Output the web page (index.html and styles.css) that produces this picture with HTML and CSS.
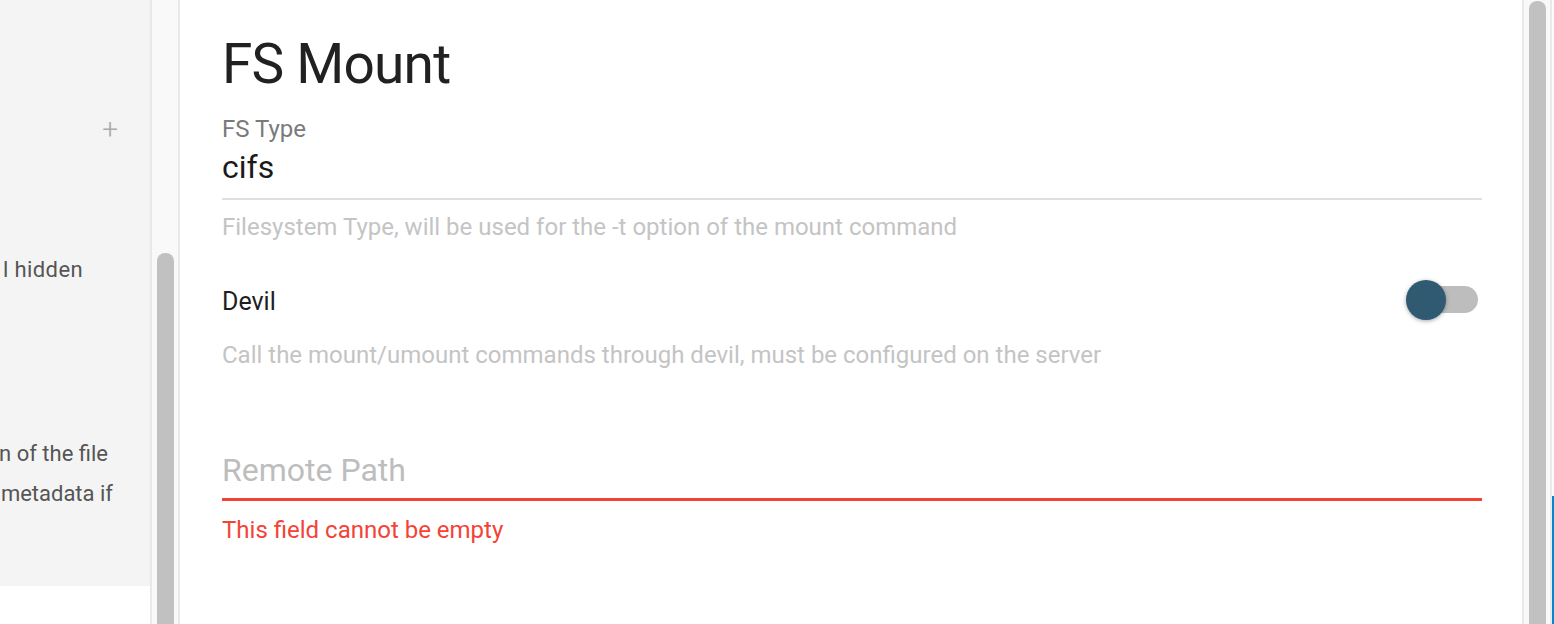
FILE: index.html
```html
<!DOCTYPE html>
<html>
<head>
<meta charset="utf-8">
<link rel="stylesheet" href="styles.css">
</head>
<body>
<div class="app">
  <aside class="side">
    <div class="side-panel">
      <div class="plus-row"><span class="plus">+</span></div>
      <div class="side-text t1 w1"><span>l hidden</span></div>
      <div class="side-text t2 w2"><span>n of the file</span></div>
      <div class="side-text w3"><span>metadata if</span></div>
    </div>
  </aside>
  <div class="scroll left-scroll"><div class="thumb"></div></div>
  <main class="main">
    <h1 class="title">FS Mount</h1>
    <div class="field">
      <label class="label">FS Type</label>
      <div class="value">cifs</div>
      <div class="line"></div>
      <div class="help help1">Filesystem Type, will be used for the -t option of the mount command</div>
    </div>
    <div class="toggle-row">
      <span class="toggle-label">Devil</span>
      <span class="switch"><span class="track"></span><span class="knob"></span></span>
    </div>
    <div class="help help2">Call the mount/umount commands through devil, must be configured on the server</div>
    <div class="field err-field">
      <div class="placeholder">Remote Path</div>
      <div class="line err-line"></div>
      <div class="err">This field cannot be empty</div>
    </div>
  </main>
  <div class="scroll right-scroll"><div class="thumb"></div></div>
  <div class="sliver"><div class="sliver-blue"></div></div>
</div>
</body>
</html>
```
FILE: styles.css
```css
* { box-sizing: border-box; }
html, body { margin: 0; padding: 0; height: 100%; overflow: hidden; }
body { font-family: Roboto, "Liberation Sans", sans-serif; background: #fff; }
.app { display: flex; height: 624px; }

.side { width: 150px; flex: none; background: #fff; }
.side-panel { height: 586px; background: #f4f4f4; padding-top: 116px; }
.plus-row { display: flex; justify-content: flex-end; padding-right: 32px; }
.plus { font-size: 28px; font-weight: 300; color: #a9a9a9; line-height: 28px; }
.side-text { display: flex; justify-content: flex-end; white-space: nowrap; font-size: 22px; color: #555; line-height: 40px; }
.w1 { width: 83px; letter-spacing: 0.4px; }
.w2 { width: 108px; }
.w3 { width: 113px; }
.t1 { margin-top: 106px; }
.t2 { margin-top: 144px; }

.scroll { width: 30px; flex: none; background: #f9f9f9; border-left: 2px solid #e9e9e9; border-right: 2px solid #e9e9e9; display: flex; flex-direction: column; padding: 0 4px 0 5px; }
.thumb { background: #c1c1c1; border-radius: 8px 8px 0 0; flex: 1; }
.left-scroll { padding-top: 253px; }
.right-scroll { padding-top: 1px; }

.main { flex: 1; padding: 24px 40px 0 42px; background: #fff; }
.title { margin: 0; font-size: 55px; font-weight: 400; color: #212121; line-height: 80px; letter-spacing: -0.8px; }
.label { display: block; font-size: 24px; color: #7a7a7a; line-height: 28px; margin-top: 11px; }
.value { font-size: 32px; color: #1a1a1a; line-height: 40px; margin-top: 4px; }
.line { height: 2px; background: #e0e0e0; margin-top: 11px; }
.help { font-size: 24px; color: #c4c4c4; line-height: 28px; }
.help1 { margin-top: 13px; }
.toggle-row { display: flex; align-items: flex-start; justify-content: space-between; margin-top: 39px; height: 40px; padding-right: 4px; }
.toggle-label { font-size: 25px; color: #1e1e1e; line-height: 40px; margin-top: 2px; }
.switch { position: relative; width: 72px; height: 40px; }
.track { position: absolute; left: 14px; top: 6px; width: 58px; height: 27px; border-radius: 14px; background: #bdbdbd; }
.knob { position: absolute; left: 0; top: 0; width: 40px; height: 40px; border-radius: 50%; background: #2f5a71; box-shadow: 0 1px 4px rgba(0,0,0,0.35); }
.help2 { margin-top: 21px; }
.err-field { margin-top: 81px; }
.placeholder { font-size: 32px; color: #bdbdbd; line-height: 40px; }
.err-line { height: 3px; background: #f44336; margin-top: 8px; }
.err { font-size: 24px; color: #f44336; line-height: 28px; margin-top: 15px; }

.sliver { width: 2px; flex: none; background: #fbfbfb; display: flex; flex-direction: column; justify-content: flex-end; }
.sliver-blue { height: 128px; background: #0288d1; }
```
